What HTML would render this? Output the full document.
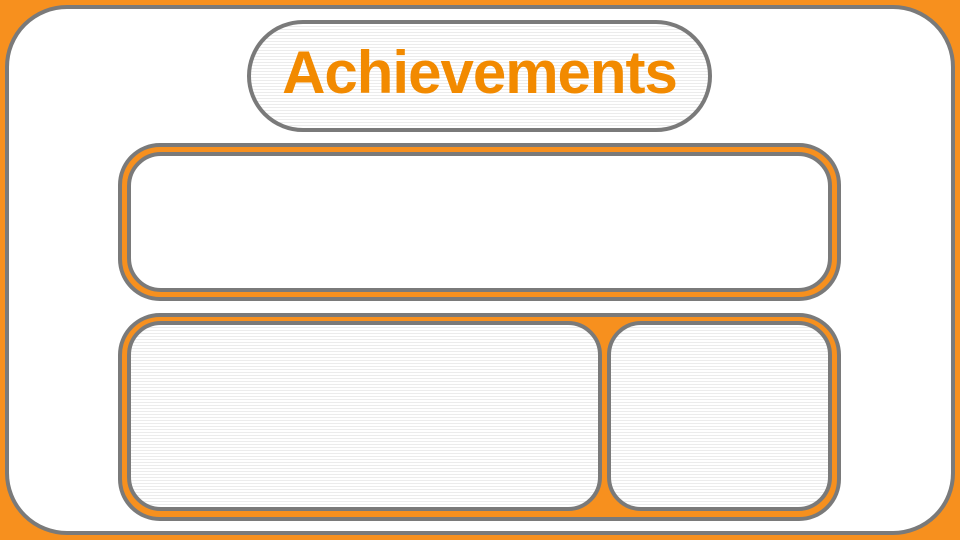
<!DOCTYPE html>
<html><head><style>
body{margin:0;width:960px;height:540px;background:#f7901e;position:relative;overflow:hidden;font-family:"Liberation Sans",sans-serif}
div{position:absolute;box-sizing:border-box}
.stripe{background:repeating-linear-gradient(#fff 0 2px,#ececec 2px 3px)}
</style></head><body>
<div style="left:5px;top:5px;width:950px;height:530px;background:#fff;border:4px solid #7a7a7a;border-radius:62px"></div>
<div class="stripe" style="left:247px;top:20px;width:465px;height:112px;border:4px solid #7a7a7a;border-radius:56px"></div>
<div style="left:247px;top:38px;width:465px;height:70px;text-align:center;color:#f28a00;font-weight:bold;font-size:60px;line-height:70px;letter-spacing:-1px">Achievements</div>

<div style="left:118px;top:143px;width:723px;height:158px;background:#f7901e;border:4px solid #7a7a7a;border-radius:42px"></div>
<div style="left:127px;top:152px;width:705px;height:140px;background:#fff;border:4px solid #7a7a7a;border-radius:34px"></div>

<div style="left:118px;top:313px;width:723px;height:208px;background:#f7901e;border:4px solid #7a7a7a;border-radius:42px"></div>
<div class="stripe" style="left:127px;top:321px;width:475px;height:190px;border:4px solid #7a7a7a;border-radius:34px"></div>
<div class="stripe" style="left:607px;top:321px;width:225px;height:190px;border:4px solid #7a7a7a;border-radius:34px"></div>
</body></html>
